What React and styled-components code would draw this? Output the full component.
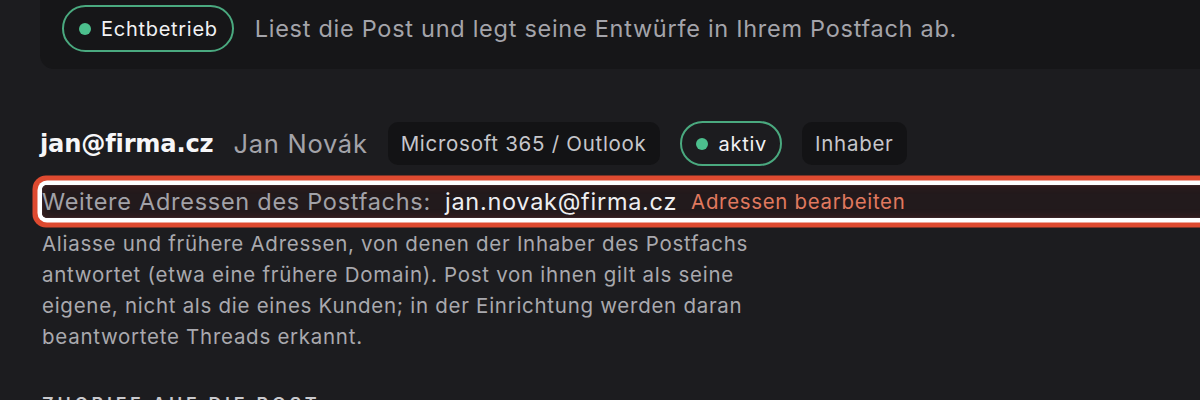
import React from "react";
import styled, { createGlobalStyle } from "styled-components";

const Global = createGlobalStyle`
  html { margin: 0; padding: 0; background: #1c1c1f; overflow: hidden; }
  body { margin: 0; padding: 0; font-family: Inter, "Noto Sans", sans-serif; color: #e8e8ea; letter-spacing: 0.045em; }
  * { box-sizing: border-box; }
`;

const Page = styled.div`
  width: 1240px;
  padding-left: 40px;
`;

const Card = styled.section`
  margin-top: -20px;
  padding: 25px 20px 17px 22px;
  background: #161618;
  border-radius: 14px;
  display: flex;
  align-items: center;
  gap: 21px;
`;

const Pill = styled.span`
  display: inline-flex;
  align-items: center;
  gap: ${(p) => p.$gap || 10}px;
  height: ${(p) => p.$h || 47}px;
  padding: 0 ${(p) => p.$pr || 14}px 0 ${(p) => p.$pl || 15}px;
  border: 2px solid #4aa97f;
  border-radius: 999px;
  font-size: 20px;
  color: #f2f2f4;
  white-space: nowrap;
`;

const Dot = styled.span`
  width: 12px;
  height: 12px;
  border-radius: 50%;
  background: #4cbf8d;
  flex: none;
`;

const Lead = styled.p`
  margin: 0;
  font-size: 23.5px;
  color: #a4a4aa;
  white-space: nowrap;
`;

const Account = styled.div`
  margin-top: 52px;
  display: flex;
  align-items: center;
  gap: 20px;
  height: 45px;
`;

const Email = styled.span`
  font-family: "DejaVu Sans", sans-serif;
  font-weight: 700;
  font-size: 24.2px;
  color: #f6f6f8;
  letter-spacing: -0.2px;
`;

const Name = styled.span`
  font-size: 25.5px;
  color: #a3a3a9;
`;

const Chip = styled.span`
  display: inline-flex;
  align-items: center;
  height: 43px;
  padding: 0 13px;
  background: #131315;
  border-radius: 10px;
  font-size: 20.5px;
  color: #c6c6cb;
  white-space: nowrap;
`;

const AliasRow = styled.div`
  margin: 19px 0 0 2px;
  width: 1198px;
  height: 33px;
  display: flex;
  align-items: center;
  gap: 14px;
  border-radius: 5px;
  background: #221a1c;
  box-shadow: inset 0 0 0 1px #3a2426, inset 0 0 10px rgba(224, 74, 48, 0.18),
    0 0 0 4.5px #ffffff, 0 0 0 9.5px #de4a30;
  white-space: nowrap;
`;

const AliasLabel = styled.span`
  font-size: 23.5px;
  color: #a2a2a8;
`;

const AliasValue = styled.span`
  font-size: 23.5px;
  color: #eeeef0;
`;

const EditLink = styled.a`
  font-size: 20.4px;
  color: #e0795f;
  cursor: pointer;
`;

const Help = styled.p`
  margin: 10px 0 0;
  padding-left: 2px;
  max-width: 760px;
  font-size: 20.5px;
  line-height: 31px;
  color: #a9a9ae;
`;

const Heading = styled.h3`
  margin: 42px 0 0;
  padding-left: 2px;
  font-size: 18px;
  line-height: 22px;
  font-weight: 600;
  letter-spacing: 3.7px;
  text-transform: uppercase;
  color: #c9c9cd;
`;

export default function App() {
  return (
    <>
      <Global />
      <Page>
        <Card>
          <Pill>
            <Dot />
            Echtbetrieb
          </Pill>
          <Lead>Liest die Post und legt seine Entwürfe in Ihrem Postfach ab.</Lead>
        </Card>

        <Account>
          <Email>jan@firma.cz</Email>
          <Name>Jan Novák</Name>
          <Chip>Microsoft 365 / Outlook</Chip>
          <Pill $h={45} $gap={11} $pl={14} $pr={13}>
            <Dot />
            aktiv
          </Pill>
          <Chip>Inhaber</Chip>
        </Account>

        <AliasRow>
          <AliasLabel>Weitere Adressen des Postfachs:</AliasLabel>
          <AliasValue>jan.novak@firma.cz</AliasValue>
          <EditLink>Adressen bearbeiten</EditLink>
        </AliasRow>

        <Help>
          Aliasse und frühere Adressen, von denen der Inhaber des Postfachs antwortet (etwa
          eine frühere Domain). Post von ihnen gilt als seine eigene, nicht als die eines
          Kunden; in der Einrichtung werden daran beantwortete Threads erkannt.
        </Help>

        <Heading>Zugriff auf die Post</Heading>
      </Page>
    </>
  );
}
